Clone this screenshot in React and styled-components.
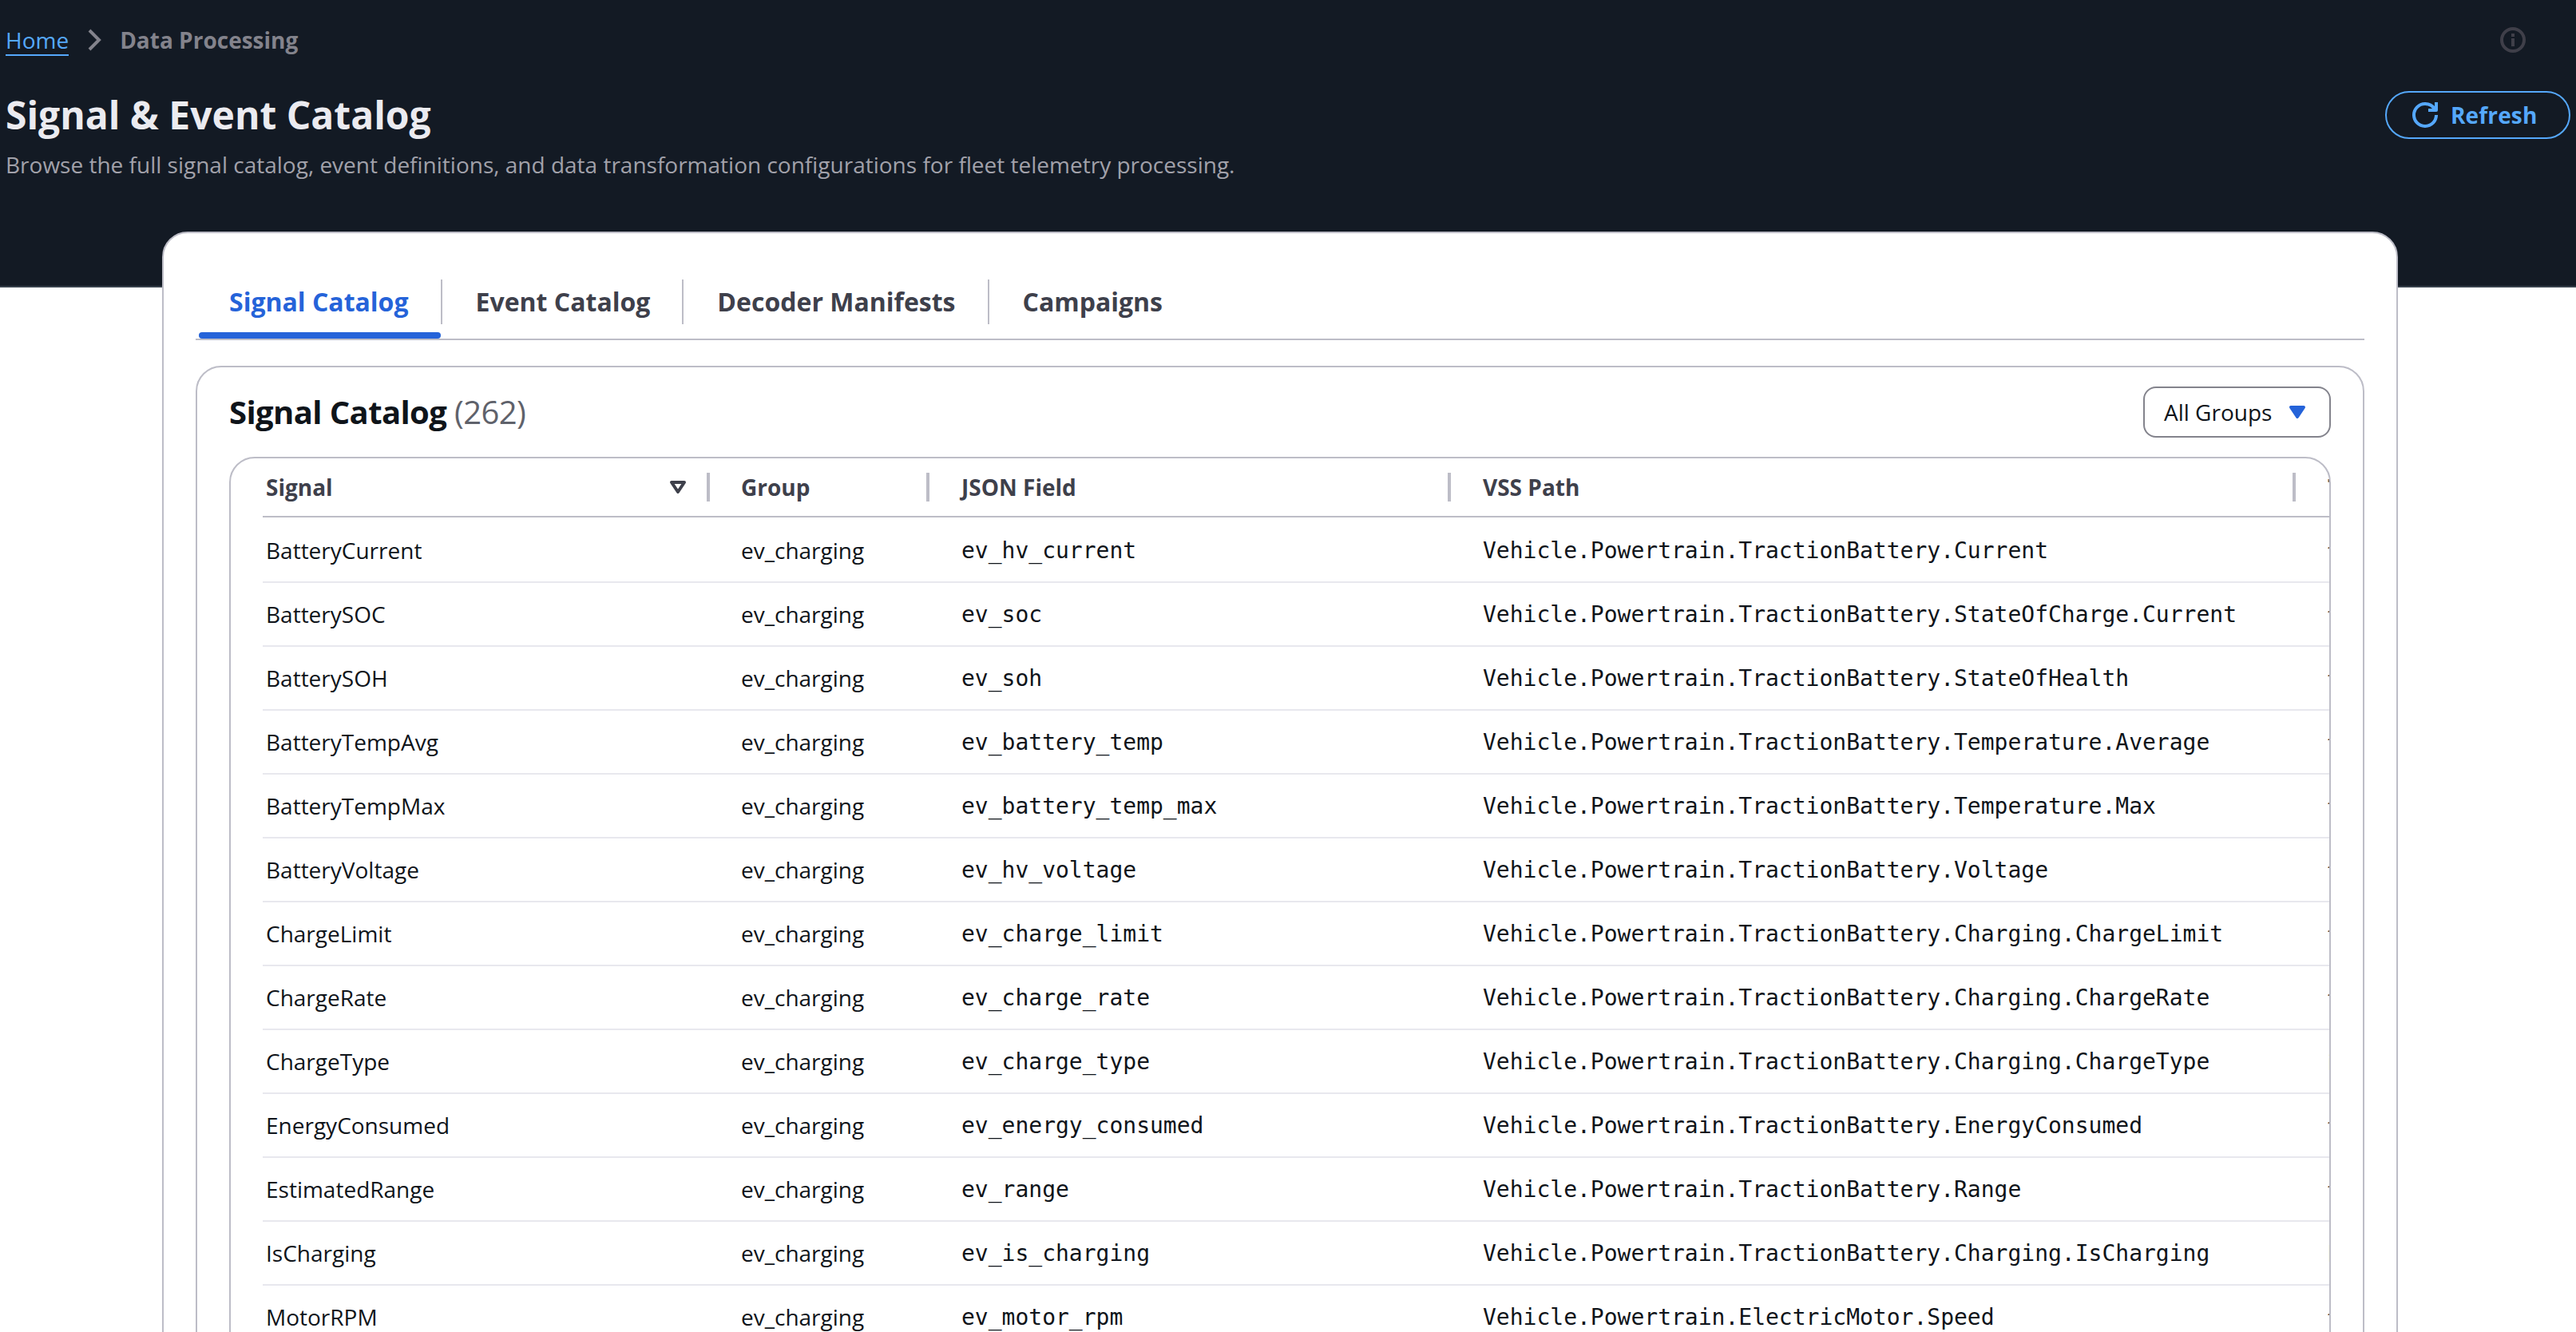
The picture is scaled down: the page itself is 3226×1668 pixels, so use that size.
import React, {useState} from 'react';
import styled, {createGlobalStyle} from 'styled-components';

const tabs = ['Signal Catalog', 'Event Catalog', 'Decoder Manifests', 'Campaigns'];

const signals = [
    ['BatteryCurrent', 'ev_hv_current', 'TractionBattery.Current', 'float'],
    ['BatterySOC', 'ev_soc', 'TractionBattery.StateOfCharge.Current', 'float'],
    ['BatterySOH', 'ev_soh', 'TractionBattery.StateOfHealth', 'float'],
    ['BatteryTempAvg', 'ev_battery_temp', 'TractionBattery.Temperature.Average', 'float'],
    ['BatteryTempMax', 'ev_battery_temp_max', 'TractionBattery.Temperature.Max', 'float'],
    ['BatteryVoltage', 'ev_hv_voltage', 'TractionBattery.Voltage', 'float'],
    ['ChargeLimit', 'ev_charge_limit', 'TractionBattery.Charging.ChargeLimit', 'float'],
    ['ChargeRate', 'ev_charge_rate', 'TractionBattery.Charging.ChargeRate', 'float'],
    ['ChargeType', 'ev_charge_type', 'TractionBattery.Charging.ChargeType', 'int'],
    ['EnergyConsumed', 'ev_energy_consumed', 'TractionBattery.EnergyConsumed', 'float'],
    ['EstimatedRange', 'ev_range', 'TractionBattery.Range', 'float'],
    ['IsCharging', 'ev_is_charging', 'TractionBattery.Charging.IsCharging', 'boolean'],
    ['MotorRPM', 'ev_motor_rpm', 'ElectricMotor.Speed', 'float'],
].map(([name, field, path, type]) => ({
    name,
    group: 'ev_charging',
    field,
    path: `Vehicle.Powertrain.${path}`,
    type,
}));

const App = () => {
    const [activeTab, setActiveTab] = useState(tabs[0]);

    return (
        <Page>
            <GlobalStyle/>
            <PageHeader>
                <TopRow>
                    <Breadcrumbs>
                        <HomeLink href="#">Home</HomeLink>
                        <Icon viewBox="0 0 16 16">
                            <path d="M5 2l6 6-6 6"/>
                        </Icon>
                        <Current>Data Processing</Current>
                    </Breadcrumbs>
                    <InfoButton>
                        <Icon viewBox="0 0 16 16">
                            <circle cx="8" cy="8" r="7"/>
                            <path d="M8 4v2M8 7v5"/>
                        </Icon>
                    </InfoButton>
                </TopRow>
                <TitleRow>
                    <Title>Signal &amp; Event Catalog</Title>
                    <RefreshButton>
                        <Icon viewBox="0 0 16 16" strokeLinejoin="round">
                            <path d="M10 5h5V0"/>
                            <path d="M15 8a6.957 6.957 0 0 1-7 7 6.957 6.957 0 0 1-7-7 6.957 6.957 0 0 1 7-7 6.87 6.87 0 0 1 6.3 4"/>
                        </Icon>
                        Refresh
                    </RefreshButton>
                </TitleRow>
                <Description>
                    Browse the full signal catalog, event definitions, and data transformation configurations for fleet telemetry processing.
                </Description>
            </PageHeader>

            <Card>
                <TabList>
                    {tabs.map(tab =>
                        <Tab key={tab} $active={tab === activeTab} onClick={() => setActiveTab(tab)}>
                            <TabLabel>{tab}</TabLabel>
                        </Tab>)}
                </TabList>

                <Container>
                    <ContainerHeader>
                        <Heading>Signal Catalog <Counter>(262)</Counter></Heading>
                        <Select>
                            All Groups
                            <CaretIcon viewBox="0 0 16 16" strokeLinejoin="round">
                                <path d="M4 5h8l-4 6z"/>
                            </CaretIcon>
                        </Select>
                    </ContainerHeader>

                    <Table>
                        <HeadRow>
                            <HeadCell>
                                Signal
                                <Icon viewBox="0 0 16 16" strokeLinejoin="round">
                                    <path d="M4 5h8l-4 6z"/>
                                </Icon>
                            </HeadCell>
                            <HeadCell>Group</HeadCell>
                            <HeadCell>JSON Field</HeadCell>
                            <HeadCell>VSS Path</HeadCell>
                            <HeadCell>Type</HeadCell>
                        </HeadRow>
                        {signals.map(signal =>
                            <Row key={signal.name}>
                                <Cell>{signal.name}</Cell>
                                <Cell>{signal.group}</Cell>
                                <CodeCell>{signal.field}</CodeCell>
                                <CodeCell>{signal.path}</CodeCell>
                                <Cell>{signal.type}</Cell>
                            </Row>)}
                    </Table>
                </Container>
            </Card>
        </Page>
    );
};

const GlobalStyle = createGlobalStyle`
  * {
    box-sizing: border-box;
  }

  body {
    margin: 0;
    background: #fff;
    color: #0f141a;
    font-family: "Open Sans", sans-serif;
    font-size: 28px;
    line-height: 40px;
  }

  button {
    font: inherit;
    background: none;
    border: none;
    padding: 0;
    cursor: pointer;
  }
`;

const Page = styled.div`
  height: 100vh;
  overflow: hidden;
`;

const Icon = styled.svg`
  display: block;
  flex: none;
  width: 32px;
  height: 32px;
  fill: none;
  stroke: currentColor;
  stroke-width: 2;
`;

const CaretIcon = styled(Icon)`
  fill: currentColor;
  color: #2563d9;
`;

const PageHeader = styled.header`
  height: 360px;
  padding: 30px 7px 0;
  background: #131a24;
  border-bottom: 2px solid #36404b;
`;

const TopRow = styled.div`
  display: flex;
  align-items: center;
  justify-content: space-between;
  padding-right: 56px;
`;

const Breadcrumbs = styled.nav`
  display: flex;
  align-items: center;
  gap: 16px;
  color: #83838c;
`;

const HomeLink = styled.a`
  color: #55a8fc;
  text-decoration: none;
  box-shadow: inset 0 -2px #55a8fc;
`;

const Current = styled.span`
  font-weight: 700;
`;

const InfoButton = styled.button`
  color: #3f3f49;
`;

const TitleRow = styled.div`
  display: flex;
  align-items: center;
  justify-content: space-between;
  margin-top: 44px;
`;

const Title = styled.h1`
  margin: 0;
  color: #ebebf0;
  font-size: 48px;
  font-weight: 700;
  line-height: 60px;
`;

const RefreshButton = styled.button`
  display: flex;
  align-items: center;
  gap: 16px;
  width: 232px;
  height: 60px;
  padding: 0 32px;
  border: 2px solid #55a8fc;
  border-radius: 40px;
  color: #55a8fc;
  font-weight: 700;
  letter-spacing: 0.14px;
`;

const Description = styled.p`
  margin: 12px 0 0;
  color: #a1a1aa;
`;

const Card = styled.main`
  position: relative;
  width: 2800px;
  min-height: 1500px;
  margin: -70px 0 0 203px;
  padding: 58px 40px 0;
  background: #fff;
  border: 2px solid #bdbdc7;
  border-radius: 32px;
`;

const TabList = styled.div`
  display: flex;
  gap: 2px;
  padding-left: 2px;
  border-bottom: 2px solid #bdbdc7;
`;

const Tab = styled.button`
  display: flex;
  flex-direction: column;
  gap: 10px;
  color: ${props => props.$active ? '#2563d9' : '#3e404b'};
  font-size: 32px;
  font-weight: 700;

  &::after {
    content: '';
    height: 8px;
    margin: 0 2px;
    border-radius: 4px;
    background: ${props => props.$active ? '#2563d9' : 'transparent'};
    align-self: stretch;
  }
`;

const TabLabel = styled.span`
  padding: 0 40px;
  border-right: 2px solid #bdbdc7;
  line-height: 56px;

  ${Tab}:last-child & {
    border-right: none;
  }
`;

const Container = styled.section`
  min-height: 1300px;
  margin-top: 32px;
  padding: 0 40px;
  border: 2px solid #bdbdc7;
  border-radius: 32px;
`;

const ContainerHeader = styled.div`
  display: flex;
  align-items: center;
  justify-content: space-between;
  padding: 24px 0;
`;

const Heading = styled.h2`
  margin: 0;
  font-size: 40px;
  font-weight: 700;
  line-height: 48px;
  letter-spacing: -0.6px;
`;

const Counter = styled.span`
  color: #5f626b;
  font-weight: 400;
`;

const Select = styled.button`
  display: flex;
  align-items: center;
  justify-content: space-between;
  width: 235px;
  height: 64px;
  padding: 0 24px;
  border: 2px solid #83838c;
  border-radius: 16px;
  color: #0f141a;
`;

const Table = styled.div`
  min-height: 1200px;
  padding-left: 40px;
  overflow: hidden;
  border: 2px solid #bdbdc7;
  border-radius: 32px;
`;

const Row = styled.div`
  display: grid;
  grid-template-columns: 560px 275px 653px 1058px 300px;
  align-items: center;
  height: 80px;
  border-bottom: 2px solid #e8e8ee;

  /* the first body row is a border taller */
  &:nth-child(2) {
    height: 82px;
    padding-top: 2px;
  }
`;

const HeadRow = styled(Row)`
  height: 74px;
  border-bottom-color: #bdbdc7;
`;

const Cell = styled.div`
  padding-left: 40px;
  white-space: nowrap;

  &:first-child {
    padding-left: 4px;
  }

  &:nth-child(2) {
    padding-left: 39px;
  }
`;

const HeadCell = styled(Cell)`
  display: flex;
  align-items: center;
  justify-content: space-between;
  color: #3e404b;
  font-weight: 700;

  ${Icon} {
    margin: 0 20px 0 auto;
  }

  &::after {
    content: '';
    width: 4px;
    height: 36px;
    background: #bdbdc7;
  }
`;

const CodeCell = styled(Cell)`
  padding-top: 2px;
  font-family: "DejaVu Sans Mono", monospace;
`;

export default App;
